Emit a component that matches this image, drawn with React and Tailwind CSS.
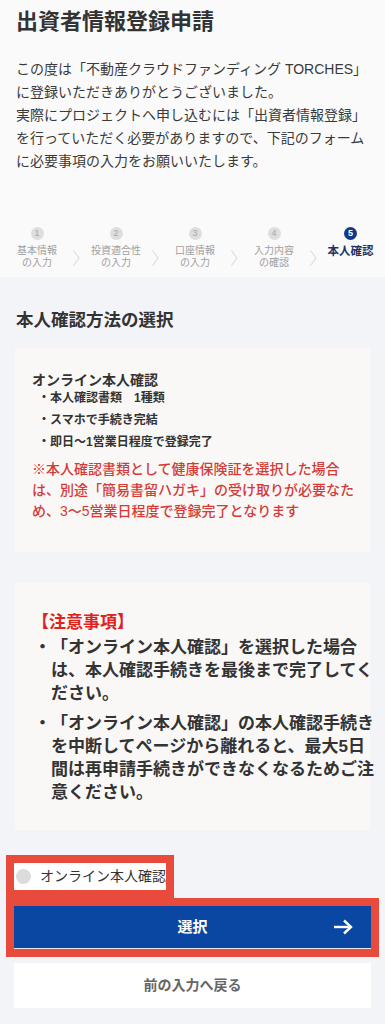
export default function App() {
  const steps = [
    { n: "1", l1: "基本情報", l2: "の入力" },
    { n: "2", l1: "投資適合性", l2: "の入力" },
    { n: "3", l1: "口座情報", l2: "の入力" },
    { n: "4", l1: "入力内容", l2: "の確認" },
  ];
  const Chevron = () => (
    <div className="w-[19px] flex justify-center pt-[23px]">
      <svg width="7" height="16" viewBox="0 0 7 16" fill="none">
        <polyline points="0.5,0.5 6,8 0.5,15.5" stroke="#d4d4d4" strokeWidth="1" />
      </svg>
    </div>
  );
  return (
    <div className="min-h-[1024px] bg-[#f3f4f7] font-['Liberation_Sans','Noto_Sans_CJK_JP',sans-serif] [font-feature-settings:'pkna'] text-[#333]">
      <div className="bg-[#fafafa] pt-[6px] pb-[8px]">
        <h1 className="px-4 text-[22px] leading-[32px] font-bold text-[#333]">出資者情報登録申請</h1>
        <p className="px-4 mt-[20px] text-[14px] leading-[23px] text-[#3a3a3a] whitespace-nowrap">
          この度は「不動産クラウドファンディング TORCHES」
          <br />
          に登録いただきありがとうございました。
          <br />
          実際にプロジェクトへ申し込むには「出資者情報登録」
          <br />
          を行っていただく必要がありますので、下記のフォーム
          <br />
          に必要事項の入力をお願いいたします。
        </p>
        <div className="mt-[54px] flex items-start px-[7px]">
          {steps.map((s) => (
            <div key={s.n} className="flex items-start">
              <div className="w-[60px] flex flex-col items-center">
                <div className="w-[13px] h-[13px] rounded-full bg-[#dedede] flex items-center justify-center text-[9px] leading-none text-[#a8a8a8]">
                  {s.n}
                </div>
                <div className="mt-[5px] text-[10px] leading-[12px] text-[#a0a0a0] text-center whitespace-nowrap">
                  {s.l1}
                  <br />
                  {s.l2}
                </div>
              </div>
              <Chevron />
            </div>
          ))}
          <div className="w-[60px] flex flex-col items-center">
            <div className="w-[13px] h-[13px] rounded-full bg-[#0d3a8a] flex items-center justify-center text-[9px] leading-none font-bold text-white">
              5
            </div>
            <div className="mt-[5px] text-[11.5px] leading-[12px] font-bold text-[#1c3566] text-center whitespace-nowrap">
              本人確認
            </div>
          </div>
        </div>
      </div>

      <div className="pt-[31px] pb-[16px]">
        <h2 className="px-4 text-[17.5px] leading-[24px] font-bold text-[#333]">本人確認方法の選択</h2>

        <div className="mx-[15px] mt-[16px] bg-[#f9f8f6] pl-[17px] pr-[10px] pt-[25px] pb-[30px]">
          <div className="text-[14px] leading-[14px] font-bold text-[#333]">オンライン本人確認</div>
          <ul className="pl-[6px]">
            {["本人確認書類　1種類", "スマホで手続き完結", "即日〜1営業日程度で登録完了"].map((t) => (
              <li key={t} className="flex h-[22px] items-center text-[12px] font-bold text-[#333]">
                <span className="w-[12px] text-center">・</span>
                <span>{t}</span>
              </li>
            ))}
          </ul>
          <p className="mt-[6px] text-[14px] leading-[21px] font-medium text-[#d43b37] whitespace-nowrap">
            ※本人確認書類として健康保険証を選択した場合
            <br />
            は、別途「簡易書留ハガキ」の受け取りが必要なた
            <br />
            め、3〜5営業日程度で登録完了となります
          </p>
        </div>

        <div className="mx-[15px] mt-[31px] bg-[#f9f8f6] pl-[17px] pr-[6px] pt-[29px] pb-[26px]">
          <div className="text-[17px] leading-[22px] font-bold text-[#e0221c]">【注意事項】</div>
          <div className="mt-[2px] pl-[2px] text-[17px] leading-[23px] font-bold text-[#333]">
            <div className="flex">
              <span className="w-[18px] text-center">・</span>
              <span className="whitespace-nowrap">
                「オンライン本人確認」を選択した場合
                <br />
                は、本人確認手続きを最後まで完了してく
                <br />
                ださい。
              </span>
            </div>
            <div className="flex mt-[7px]">
              <span className="w-[18px] text-center">・</span>
              <span className="whitespace-nowrap">
                「オンライン本人確認」の本人確認手続き
                <br />
                を中断してページから離れると、最大5日
                <br />
                間は再申請手続きができなくなるためご注
                <br />
                意ください。
              </span>
            </div>
          </div>
        </div>

        <div className="px-[14px] mt-[33px]">
          <label className="w-[152px] h-[27px] bg-white flex items-center outline-8 outline-[#e84b3c]">
            <span className="ml-[2px] w-[15px] h-[15px] rounded-full bg-[#dcdcdc]" />
            <span className="ml-[9px] text-[14px] text-[#333] whitespace-nowrap">オンライン本人確認</span>
          </label>
          <button className="mt-[16px] w-full h-[43px] bg-[#0a47a2] border-b border-[#e6e6e6] grid grid-cols-[1fr_auto_1fr] items-center outline-8 outline-[#e84b3c]">
            <span />
            <span className="text-[15px] font-bold text-white">選択</span>
            <span className="justify-self-end mr-[18px] flex items-center">
              <svg width="20" height="18" viewBox="0 0 20 18" fill="none">
                <line x1="1" y1="9" x2="18" y2="9" stroke="white" strokeWidth="2.4" />
                <polyline points="11,2.5 18,9 11,15.5" stroke="white" strokeWidth="2.4" fill="none" />
              </svg>
            </span>
          </button>
          <button className="mt-[14px] w-full h-[45px] bg-white flex items-center justify-center text-[14px] font-bold text-[#666]">
            前の入力へ戻る
          </button>
        </div>
      </div>
    </div>
  );
}
